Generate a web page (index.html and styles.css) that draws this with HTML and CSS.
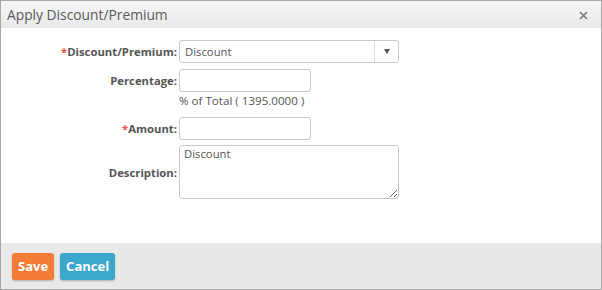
FILE: index.html
```html
<!DOCTYPE html>
<html lang="en">
<head>
    <meta charset="UTF-8">
    <title>Apply Discount/Premium</title>
    <link rel="stylesheet" href="styles.css">
</head>
<body>
    <div class="dialog">
        <div class="dialog-header">
            <span class="dialog-title">Apply Discount/Premium</span>
            <svg class="dialog-close" width="9" height="9" viewBox="0 0 9 9" aria-label="Close">
                <path d="M1 1L8 8M8 1L1 8" stroke="#7a7a7a" stroke-width="1.6"/>
            </svg>
        </div>

        <div class="dialog-body">
            <form class="form-grid">
                <label class="form-label"><span class="req">*</span>Discount/Premium:</label>
                <div class="select-box">
                    <span class="select-value">Discount</span>
                    <span class="select-arrow"></span>
                </div>

                <label class="form-label">Percentage:</label>
                <input class="text-input short" type="text">

                <span></span>
                <span class="help-text">% of Total ( 1395.0000 )</span>

                <label class="form-label"><span class="req">*</span>Amount:</label>
                <input class="text-input short" type="text">

                <label class="form-label">Description:</label>
                <textarea class="text-area">Discount</textarea>
            </form>
        </div>

        <div class="dialog-footer">
            <button class="btn btn-save" type="button">Save</button>
            <button class="btn btn-cancel" type="button">Cancel</button>
        </div>
    </div>
</body>
</html>
```

FILE: styles.css
```css
body {
    margin: 0;
    font-family: "Open Sans", "Noto Sans", sans-serif;
    color: #555;
    background: #fff;
}

.dialog {
    width: 600px;
    height: 288px;
    border: 1px solid #a8a8a8;
    display: flex;
    flex-direction: column;
    background: #fff;
}

.dialog-header {
    height: 27px;
    display: flex;
    align-items: center;
    justify-content: space-between;
    padding: 0 13px 0 6px;
    background: linear-gradient(#f6f6f6, #e9e9e9);
}

.dialog-title {
    font-size: 13.8px;
    color: #5a5a5a;
}

.dialog-close {
    margin-top: 2px;
}

.dialog-body {
    flex: 1;
    padding-top: 12px;
}

.form-grid {
    display: grid;
    grid-template-columns: 176px 220px;
    column-gap: 2px;
    row-gap: 6px;
    align-items: center;
}

.form-label {
    text-align: right;
    font-size: 11.3px;
    font-weight: bold;
    color: #555;
}

.req {
    color: #e8553b;
}

.select-box {
    height: 21px;
    border: 1px solid #c8c8c8;
    border-radius: 3px;
    display: flex;
    align-items: center;
    font-size: 11.3px;
}

.select-value {
    flex: 1;
    padding-left: 5px;
}

.select-arrow {
    width: 23px;
    height: 100%;
    border-left: 1px solid #dcdcdc;
    display: flex;
    align-items: center;
    justify-content: center;
}

.select-arrow::after {
    content: "";
    border-left: 3.5px solid transparent;
    border-right: 3.5px solid transparent;
    border-top: 5px solid #555;
}

.text-input {
    box-sizing: border-box;
    height: 23px;
    border: 1px solid #c8c8c8;
    border-radius: 3px;
    font: 11.3px "Open Sans", sans-serif;
    padding: 0 5px;
}

.text-input.short {
    width: 132px;
}

.help-text {
    font-size: 11.6px;
    line-height: 14px;
    margin-top: -4px;
    margin-bottom: 3px;
}

.text-area {
    box-sizing: border-box;
    width: 220px;
    height: 54px;
    margin-top: -1px;
    border: 1px solid #c8c8c8;
    border-radius: 3px;
    font: 11.3px "Open Sans", sans-serif;
    color: #555;
    padding: 0 4px;
    resize: both;
}

.dialog-footer {
    height: 46px;
    background: #e9e9e9;
    display: flex;
    align-items: center;
    gap: 6px;
    padding: 0 11px;
}

.btn {
    height: 27px;
    border: none;
    border-radius: 3px;
    color: #fff;
    font: bold 13px "Open Sans", sans-serif;
    padding: 0 6px;
    box-shadow: 0 1px 2px rgba(0, 0, 0, 0.25);
}

.btn-save {
    background: #f47c36;
}

.btn-cancel {
    background: #3ba8cd;
}
```
